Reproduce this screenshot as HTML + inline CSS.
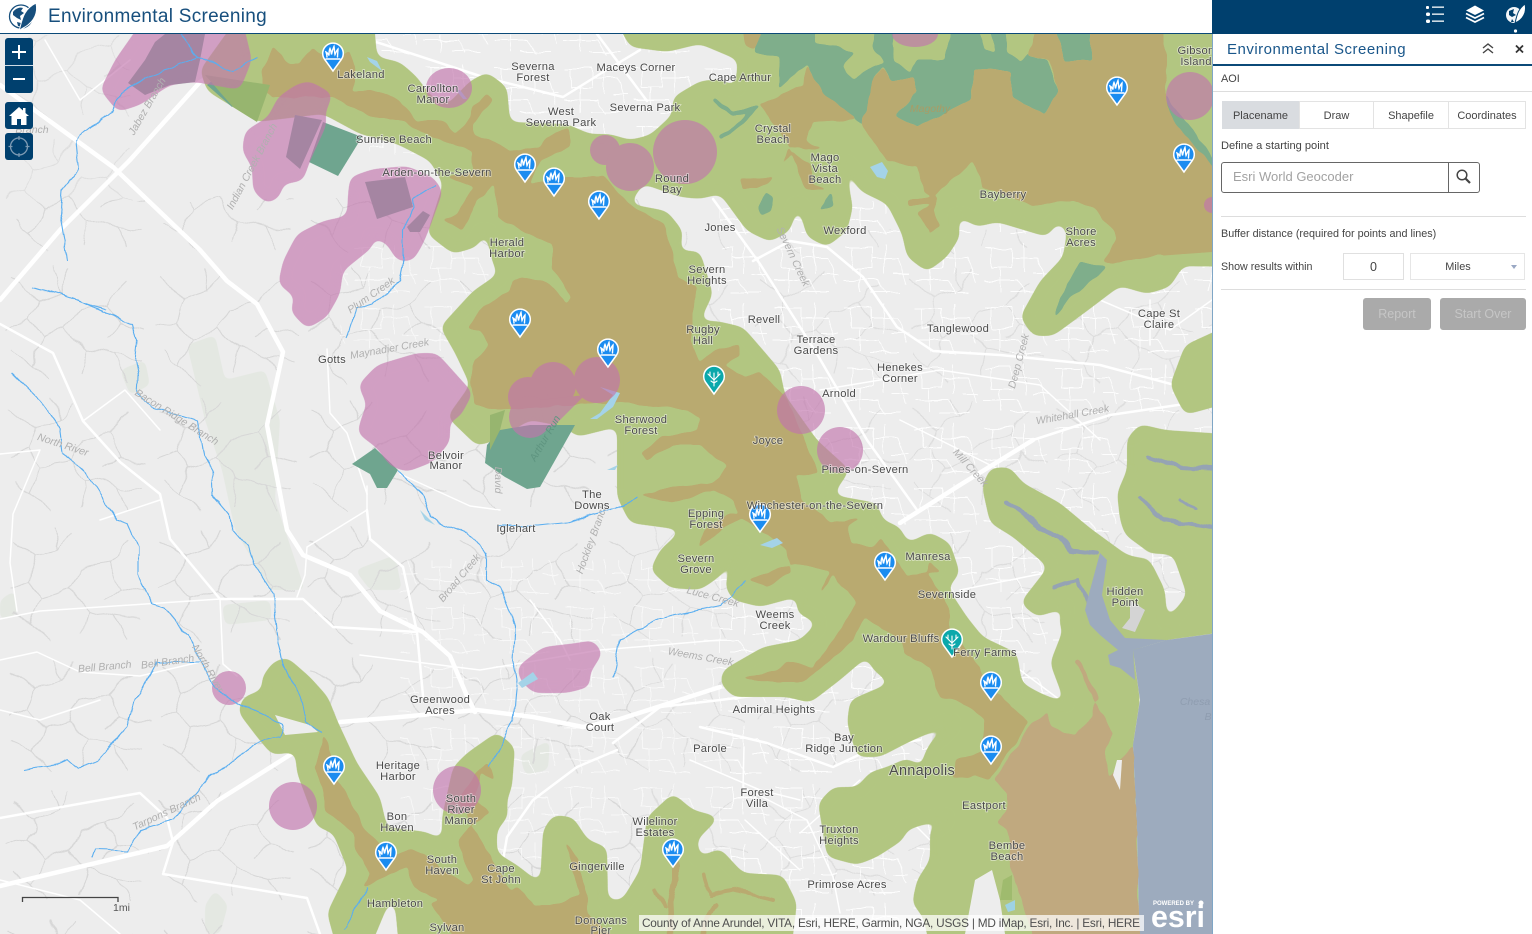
<!DOCTYPE html>
<html><head><meta charset="utf-8"><title>Environmental Screening</title>
<style>
html,body{margin:0;padding:0;width:1532px;height:934px;overflow:hidden;background:#fff;font-family:"Liberation Sans",sans-serif;color:#444}
#map{position:absolute;left:0;top:34px;width:1212px;height:900px;overflow:hidden;background:#ededed}
#map svg{position:absolute;left:0;top:-34px}
#top{position:absolute;left:0;top:0;width:1212px;height:33px;background:#fff;border-bottom:1px solid #0b4a78}
#top .t{position:absolute;left:48px;top:3px;font-size:19px;letter-spacing:.29px;color:#174f7d;line-height:25px;white-space:nowrap}
#panel{position:absolute;left:1212px;top:0;width:320px;height:934px;background:#fff;font-size:10.9px}
#panel .edge{position:absolute;left:0;top:34px;width:1px;height:900px;background:#7fa6c6}
#panel .hd{position:absolute;left:0;top:0;width:320px;height:34px;background:#00406e}
#panel div{position:absolute;white-space:nowrap}
.tab{top:101px;height:28px;line-height:28px;text-align:center;box-sizing:border-box;border:1px solid #e3e3e3;color:#444;font-size:11px}
.line{height:1px;background:#ddd}
.btn{top:298px;height:32px;line-height:33px;background:#aaa;border-radius:3px;color:#c6c6c6;text-align:center;font-size:12.5px}
.ctl{position:absolute;left:5px;width:28px;background:#00406e;border-radius:3px}
.lab text{font-size:11.2px;letter-spacing:.25px;fill:#4a4a4a;stroke:#fff;stroke-width:1.6px;stroke-opacity:.55;paint-order:stroke;text-anchor:middle;font-family:"Liberation Sans",sans-serif}
.str text{font-size:10.5px;font-style:italic;fill:#b0b0b0;text-anchor:middle;font-family:"Liberation Sans",sans-serif}
</style></head><body>
<div id="map">
<svg width="1260" height="980" viewBox="0 0 1260 980">
<defs>
<filter id="r5" filterUnits="userSpaceOnUse" x="-30" y="-30" width="1320" height="1040"><feGaussianBlur stdDeviation="5"/><feComponentTransfer><feFuncA type="linear" slope="18" intercept="-8.5"/></feComponentTransfer></filter>
<filter id="r3" filterUnits="userSpaceOnUse" x="-30" y="-30" width="1320" height="1040"><feGaussianBlur stdDeviation="3.5"/><feComponentTransfer><feFuncA type="linear" slope="14" intercept="-6.5"/></feComponentTransfer></filter>
<filter id="r1" filterUnits="userSpaceOnUse" x="-30" y="-30" width="1320" height="1040"><feTurbulence type="fractalNoise" baseFrequency=".06" numOctaves="2" seed="4" result="n"/><feDisplacementMap in="SourceGraphic" in2="n" scale="5" xChannelSelector="R" yChannelSelector="G" result="d"/><feGaussianBlur in="d" stdDeviation="1.2"/><feComponentTransfer><feFuncA type="linear" slope="10" intercept="-4.5"/></feComponentTransfer></filter>
<filter id="wob" filterUnits="userSpaceOnUse" x="-30" y="-30" width="1320" height="1040"><feTurbulence type="fractalNoise" baseFrequency=".035" numOctaves="2" seed="9" result="n"/><feDisplacementMap in="SourceGraphic" in2="n" scale="16" xChannelSelector="R" yChannelSelector="G"/></filter>
<filter id="wob2" filterUnits="userSpaceOnUse" x="-30" y="-30" width="1320" height="1040"><feTurbulence type="fractalNoise" baseFrequency=".05" numOctaves="2" seed="3" result="n"/><feDisplacementMap in="SourceGraphic" in2="n" scale="7" xChannelSelector="R" yChannelSelector="G"/></filter>
<pattern id="den" width="150" height="130" patternUnits="userSpaceOnUse"><path d="M10 20L35 38L28 60L42 78L30 105M35 38L60 30L72 12M28 60L8 68M42 78L68 70L88 88L82 115M68 70L80 50L108 44L130 22M108 44L120 66L146 72M88 88L116 96L128 120M120 66L104 78M60 30L52 8M116 96L142 100M30 105L50 122M14 92L30 105" fill="none" stroke="#d7d7d7" stroke-width="1.100"/></pattern>
<pattern id="mesh" width="70" height="60" patternUnits="userSpaceOnUse"><path d="M5 8H32V28H12V8M32 18H58M44 4V34M52 34H68M4 40H38L46 54M20 28V52M58 18L66 44M30 52H60" fill="none" stroke="#fff" stroke-width=".9" opacity=".85"/></pattern>
<g id="ic" fill="none" stroke="#fff" stroke-linecap="round">
<path d="M-7 5.500H7" stroke-width="1.500"/>
<path d="M-6 3.500C-6 1-6.500 0-7-1.500C-5-.5-4.500 1-4 2C-4-1-4-3-3-5C-2-3-2-1-1.500 1C-1-2 0-5 1-7C1.500-4 1.500-1 2 1C3-1 3.500-3 5-4.500C5-2 4.500 1 4.500 3.500" stroke-width="1.400"/>
</g>
<g id="pb"><path d="M0 17L-8.300 5.500A10.300 10.300 0 1 1 8.300 5.500Z" fill="#1b8cf0" stroke="#fff" stroke-width="1.500"/><use href="#ic" y="-.5"/></g>
<g id="pt"><path d="M0 17L-8.300 5.500A10.300 10.300 0 1 1 8.300 5.500Z" fill="#0ba8ab" stroke="#fff" stroke-width="1.500"/><path d="M0 9V-4M0 3L-4-1V-5M0 3L4-1V-5M-2 1L-6-3M2 1L6-3M0 6L3 4M0 6L-3 4" fill="none" stroke="#fff" stroke-width="1.100" stroke-linecap="round"/></g>
</defs>
<rect width="1260" height="980" fill="#ededed"/>
<!-- parks -->
<g fill="#e4e8e2" filter="url(#r3)">
<polygon points="187,345 215,335 225,380 265,370 280,420 275,500 305,590 270,590 235,530 222,470 205,420"/>
<polygon points="222,605 270,600 272,620 225,625"/><polygon points="520,755 550,740 548,770 525,775"/>
<polygon points="0,600 15,590 17,615 0,620"/><polygon points="120,370 145,360 150,385 130,395"/>
<polygon points="205,905 215,890 228,905 220,934 205,934"/><polygon points="355,570 395,555 402,590 370,590"/>
</g>
<!-- mesh and dendritic texture -->
<g filter="url(#wob)">
<rect x="0" y="200" width="640" height="780" fill="url(#den)"/>
<rect x="640" y="230" width="600" height="700" fill="url(#den)" opacity=".75"/>
<rect x="0" y="34" width="130" height="170" fill="url(#den)" opacity=".7"/>
</g>
<g filter="url(#wob2)">
<rect x="720" y="200" width="520" height="720" fill="url(#mesh)"/>
<rect x="370" y="34" width="370" height="120" fill="url(#mesh)"/>
<rect x="400" y="560" width="320" height="300" fill="url(#mesh)" opacity=".7"/>
<rect x="340" y="240" width="150" height="110" fill="url(#mesh)" opacity=".7"/>
</g>
<!-- roads -->
<g fill="none" stroke="#fff" stroke-linecap="round" stroke-linejoin="round">
<g stroke-width="4.500">
<polyline points="0,85 113,167 200,250 227,281 257,304 283,352 267,425 287,530 303,555 350,575 380,611 423,632 450,656 467,696 475,712"/>
<polyline points="0,300 60,230 130,160 200,82 240,60"/>
<polyline points="340,722 400,717 477,710 533,717 583,727 617,720 720,687"/>
<polyline points="0,886 167,846 217,801 293,753"/>
<polyline points="900,523 960,485 1033,440"/>
</g>
<g stroke-width="2.500">
<polyline points="713,199 760,264 800,327 817,354 867,440 917,510"/>
<polyline points="753,261 790,241 827,247 863,277 897,327 933,351 1000,355 1100,365 1212,395"/>
<polyline points="373,41 483,77 563,97 600,74 640,50"/><polyline points="597,34 647,101"/>
<polyline points="700,727 767,743 833,767 880,745 920,740"/>
<polyline points="617,750 577,767 533,800 507,837 503,860"/>
<polyline points="613,743 660,707 720,700 800,690"/>
<polyline points="1033,440 1110,415 1212,400"/>
<polyline points="367,510 370,539 403,567 417,632 423,696"/>
<polyline points="0,818 140,793 167,818 173,842 163,874 307,898 320,934"/>
<polyline points="0,324 53,353 83,421 120,462 160,494 170,539 220,599 270,599 303,599 333,627 417,632"/>
</g>
<g stroke-width="1.500">
<polyline points="0,454 40,450 13,514 10,563 17,611"/><polyline points="220,599 223,664 237,676"/>
<polyline points="0,660 37,652 80,672 140,676 200,662"/><polyline points="0,619 40,611 100,607 220,599"/>
<polyline points="367,486 367,510 307,547 305,575 297,597"/><polyline points="400,474 470,506 500,510"/>
<polyline points="327,349 330,413 347,433 367,494"/><polyline points="83,421 125,390 160,430"/>
<polyline points="744,747 743,787 807,820 833,877 840,913"/><polyline points="800,833 860,780"/>
<polyline points="530,600 560,640 570,660"/><polyline points="360,655 480,670 600,650 720,640"/>
<polyline points="820,390 940,370 1040,385 1100,440"/><polyline points="900,420 1000,470"/>
<polyline points="160,500 100,520"/><polyline points="0,710 40,720 100,700"/>
<polyline points="45,40 80,100 130,60"/><polyline points="560,340 600,360"/><polyline points="900,600 980,640 1060,700"/>
<polyline points="690,760 760,790 800,800"/><polyline points="0,880 80,900 120,934"/><polyline points="745,820 800,870"/>
<polyline points="1100,300 1170,330 1212,300"/><polyline points="1150,300 1150,345"/><polyline points="1060,570 960,590"/>
<polyline points="940,690 990,720"/><polyline points="880,790 960,870 950,920"/>
</g>
</g>
<!-- green -->
<g fill="#b2c681" filter="url(#r5)">
<polygon points="243,10 373,10 377,57 400,62 417,77 430,95 447,105 470,81 487,72 507,87 510,122 567,124 590,134 610,134 630,140 650,135 672,115 673,97 700,81 720,79 735,87 738,60 700,44 667,52 630,47 610,10 1240,10 1240,267 1183,266 1170,287 1147,294 1120,286 1087,311 1053,336 1033,336 1020,317 1040,281 1063,257 1067,231 1058,222 1047,237 1027,231 997,222 977,227 958,216 960,237 947,257 927,272 907,257 902,234 887,204 860,191 847,167 828,142 840,146 853,207 847,231 827,247 807,237 798,204 790,231 770,242 747,231 720,194 700,199 680,197 643,184 630,204 667,211 683,231 680,251 700,251 713,294 700,321 717,321 743,327 763,350 780,370 785,395 817,440 850,470 833,495 877,503 883,520 900,527 908,543 930,532 950,543 960,573 948,588 967,617 983,637 1017,653 1022,683 1040,693 1065,703 1040,760 1040,960 933,960 923,917 912,903 917,880 930,860 930,830 947,817 907,830 903,840 877,857 857,865 827,857 818,803 833,787 857,787 870,772 887,767 907,758 923,767 923,757 930,743 953,722 907,743 880,757 857,757 847,723 850,700 890,683 873,670 867,657 840,680 810,703 787,697 733,697 720,683 723,670 763,647 800,640 817,623 797,613 797,597 760,607 733,600 725,587 730,570 742,553 733,557 718,578 700,590 670,588 650,570 660,550 682,530 630,523 617,497 617,453 617,427 577,437 565,427 530,420 497,440 477,446 447,417 470,385 455,353 440,327 473,291 498,274 493,264 485,231 477,247 453,254 427,234 443,184 430,161 397,144 360,134 323,114 257,122 233,107 207,91 200,70"/>
<polygon points="1050,663 1063,630 1058,622 1065,608 1037,617 1020,603 1048,567 1013,537 990,523 982,487 990,468 1010,467 1023,483 1060,503 1090,528 1127,555 1150,560 1165,590 1167,620 1187,595 1173,555 1150,553 1125,535 1120,520 1117,493 1127,470 1127,438 1140,424 1165,430 1240,435 1240,630 1167,640 1133,650 1140,700 1133,745 1137,833 1140,960 1000,960 1000,850 1000,723 1065,703"/>
<polygon points="287,657 310,677 328,697 337,720 357,763 380,797 387,827 427,832 442,840 442,817 453,767 467,753 497,732 515,747 512,787 507,800 508,817 497,830 497,853 517,865 540,883 543,830 553,815 573,817 588,840 607,847 608,900 622,900 640,870 647,817 673,793 693,810 720,817 697,840 700,857 720,848 743,873 783,875 797,903 790,960 400,960 395,905 390,900 365,960 340,960 327,913 348,870 333,833 317,827 297,773 295,752 272,755 257,737 238,712 243,697 262,690 262,677 273,662"/>
<polygon points="1240,320 1185,345 1170,385 1185,415 1240,400"/>
</g>
<!-- water bay -->
<polygon points="1240,630 1167,640 1133,650 1140,700 1133,745 1137,833 1140,960 1240,960" fill="#9dabbe"/>
<g fill="none" stroke="#95a3b4" stroke-linecap="round" stroke-linejoin="round" filter="url(#wob2)">
<polyline points="1007,503 1020,510 1040,527 1060,537 1070,550 1097,553" stroke-width="5"/>
<polyline points="1053,587 1077,580 1090,607" stroke-width="4"/>
<polyline points="1148,457 1180,467 1240,470" stroke-width="4"/><polyline points="1140,497 1163,520 1240,533" stroke-width="4"/>
<polyline points="1180,500 1195,510" stroke-width="3"/>
</g>
<polygon points="1100,553 1107,560 1102,595 1110,620 1125,638 1167,640 1133,650 1135,680 1120,668 1110,665 1108,655 1118,650 1100,635 1090,625 1085,610 1090,590" fill="#9dabbe"/>
<polygon points="1130,600 1145,610 1135,632 1122,628 1130,618" fill="#d4d4d4"/>
<!-- teal north -->
<g fill="#7fae8b" filter="url(#r1)">
<polygon points="760,10 755,54 780,57 778,90 807,64 823,94 862,124 884,114 873,81 883,66 892,81 913,76 918,92 895,116 917,127 972,99 975,69 1012,72 1012,97 1045,114 1059,91 1048,61 1028,57 1040,10"/>
<polygon points="1050,10 1065,62 1092,59 1088,10"/>
<polygon points="1165,94 1240,195 1240,225 1168,130"/>
<polygon points="1080,261 1107,267 1067,301 1053,318 1060,298"/>
<polygon points="758,208 766,192 772,197 771,210 762,216"/>
<polyline points="713,99 733,114 755,109 735,128 720,138" fill="none" stroke="#7fae8b" stroke-width="4"/>
<polygon points="825,200 832,192 833,205 820,212"/>
</g>
<g fill="#b2c681" filter="url(#r1)">
<polygon points="813,10 815,44 840,47 853,54 843,67 853,79 873,67 885,62 873,47 875,10"/>
<polygon points="893,44 895,61 910,72 917,59 945,59 957,10 895,10"/>
<polygon points="1000,10 1008,51 1020,62 1033,51 1040,42 1043,10"/>
<polygon points="975,10 985,50 995,52 985,10"/>
</g>
<!-- tan -->
<g fill="#b9aa70" filter="url(#r1)">
<polygon points="273,47 290,64 300,64 312,48 335,60 350,51 355,70 352,91 380,91 400,101 417,121 443,121 455,134 470,117 473,107 487,94 493,101 472,124 475,134 510,151 540,147 547,137 570,127 570,147 540,161 530,184 567,177 603,177 630,204 663,224 673,251 677,277 697,287 693,324 690,340 700,362 715,350 738,345 740,355 725,365 745,378 760,372 785,395 800,430 815,463 818,473 797,475 802,500 830,522 863,518 848,525 850,543 873,547 882,538 908,577 927,572 930,562 940,572 928,573 950,610 950,630 980,667 983,683 1002,697 1030,723 990,780 975,775 970,778 952,777 957,760 982,750 985,720 957,700 940,697 930,667 903,653 903,643 865,617 852,640 843,650 803,682 770,682 742,678 777,670 787,662 813,667 838,633 857,602 833,575 817,600 830,572 793,563 767,573 748,580 767,587 790,573 788,555 787,550 760,530 742,518 725,527 710,540 698,548 705,530 727,515 740,513 733,500 713,490 673,503 640,495 670,487 713,483 727,467 700,445 673,445 647,462 640,453 663,437 697,430 700,418 687,410 620,402 500,410 475,405 470,385 475,360 490,345 480,330 467,327 483,307 510,291 513,281 520,277 550,284 567,304 572,297 552,268 552,244 523,231 498,217 495,184 477,201 463,231 443,221 457,214 473,187 447,177 473,171 473,151 443,141 420,131 403,121 370,116 355,109 333,97 272,97 263,91 262,70"/>
<polygon points="1088,10 1160,10 1167,67 1165,94 1173,121 1240,200 1240,250 1157,256 1112,264 1103,261 1118,237 1093,207 1073,201 1033,206 983,187 973,162 950,181 937,194 907,201 908,207 933,203 917,214 930,231 923,237 940,227 933,211 938,197 923,191 917,166 887,162 863,127 862,124 873,81 883,67 892,81 913,76 918,92 895,116 917,127 972,99 975,69 1012,72 1012,97 1045,114 1059,91 1050,61 1028,57 1040,10 1050,10 1065,62 1092,59"/>
<polygon points="760,104 802,86 807,64 822,92 857,119 813,122 805,141 825,150 790,147 775,177 740,179 742,189 760,186 768,184 793,151 810,165 813,184 828,191 805,188 790,147"/>
<polygon points="755,10 760,34 755,50 745,45 740,10"/>
<polygon points="323,735 332,757 337,780 345,790 357,815 365,830 385,848 390,855 410,850 425,853 450,875 468,885 473,880 463,860 458,840 470,827 490,812 475,800 482,773 495,780 487,762 476,775 458,800 510,890 517,887 530,900 533,905 550,905 568,900 580,895 573,870 565,840 577,857 587,897 587,913 640,960 470,960 430,903 440,900 413,888 407,867 363,888 370,873 355,850 353,833 325,810 322,787 315,768"/>
</g>
<g fill="none" stroke="#b9aa70" stroke-linejoin="round" stroke-linecap="round" filter="url(#wob2)">
<polyline points="675,858 675,880 670,900 672,950" stroke-width="6"/>
<polyline points="705,875 710,895 735,890 773,900" stroke-width="4"/><polyline points="715,905 705,925 700,950" stroke-width="5"/>
<polyline points="655,890 665,905" stroke-width="4"/>
</g>
<polygon points="1112,264 1157,256 1240,250 1240,267 1183,266 1120,275" fill="#b2c681"/>
<!-- light tan lower -->
<g filter="url(#r1)"><polygon points="1033,723 1047,712 1052,727 1065,733 1075,735 1093,716 1095,700 1113,733 1105,753 1108,778 1133,745 1137,833 1140,960 1040,960 1027,917 1010,867 1008,830 997,823 1007,810 1007,793 995,780" fill="#c0a97f"/>
<polyline points="1077,660 1097,700" fill="none" stroke="#c0a97f" stroke-width="5"/></g>
<polygon points="1003,880 1012,875 1012,900 1000,900" fill="#9fbb6e"/>
<!-- white pockets -->
<g fill="#ededed">
<polygon points="1095,712 1085,735 1072,725 1085,705" opacity="0"/>
<polygon points="1117,760 1122,760 1120,790 1113,775"/>
<polygon points="975,880 992,870 1000,900 1005,934 965,934"/>
<polygon points="275,715 310,725 318,732 285,735"/>
</g>
<polygon points="1005,905 1015,900 1015,910 1008,912" fill="#9ed2e4"/>
<!-- dark teal under pink -->
<g fill="#6fa58f">
<polygon points="323,122 362,137 338,176 309,162"/>
<polygon points="295,115 322,120 300,169 286,157"/>
<polygon points="128,83 145,60 155,42 165,34 205,34 200,60 195,82 170,85 145,95"/>
<polygon points="207,85 232,107 240,100 213,80"/>
<polygon points="365,182 405,177 413,207 377,219"/>
<polygon points="407,227 423,211 430,215 420,232 410,232"/>
<polygon points="487,445 500,430 530,425 575,425 540,487 527,489 505,477 485,463"/>
<polygon points="352,464 375,448 398,470 387,488 377,488 370,474"/>
</g>
<polygon points="205,75 270,85 257,122 233,107" fill="#97b56f"/>
<polygon points="500,430 490,450 490,415 505,410" fill="#97b56f"/>
<!-- lakes -->
<g fill="#a4d3e8">
<polygon points="600,387 620,393 613,407 597,419 590,419 600,413 613,395"/>
<polygon points="870,167 882,162 888,171 885,179 877,177"/>
<polygon points="760,545 777,538 783,543 772,548"/>
<polygon points="367,57 377,61 382,71 370,62"/>
<polygon points="460,90 467,99 463,99 456,90"/>
<polygon points="607,470 618,465 615,470"/>
<polygon points="420,510 430,520 435,525 425,520"/>
</g>
<!-- pink -->
<g fill="#c275ad" opacity=".65">
<g filter="url(#r5)">
<polygon points="150,10 115,60 100,90 118,112 140,105 170,85 195,82 240,90 252,60 240,10"/>
<polygon points="310,81 333,94 325,114 327,124 310,161 303,181 283,184 280,197 267,204 253,191 252,167 242,151 245,131 268,117 278,97 297,84"/>
<polygon points="350,177 373,169 407,166 433,177 443,191 430,227 423,244 413,261 397,261 387,244 373,237 373,247 343,271 340,294 327,317 307,329 290,311 295,297 278,284 283,261 297,234 323,221 347,216 348,194"/>
<polygon points="358,385 377,365 417,353 437,353 473,393 460,417 450,421 450,442 433,462 407,472 390,466 377,448 357,433 363,413 367,405"/>
<polygon points="517,667 543,647 577,643 593,640 603,653 590,673 590,687 567,693 533,693 520,680"/>
</g>
<ellipse cx="449" cy="88" rx="23" ry="20"/>
<circle cx="605" cy="150" r="15"/><circle cx="630" cy="167" r="24"/><circle cx="685" cy="152" r="32"/>
<circle cx="1190" cy="96" r="24"/><circle cx="1212" cy="205" r="8"/><ellipse cx="915" cy="34" rx="23" ry="13"/>
<circle cx="597" cy="380" r="23"/><circle cx="553" cy="385" r="23"/><circle cx="528" cy="397" r="20"/><circle cx="530" cy="417" r="21"/><polygon points="540,400 585,395 555,425 545,430"/>
<circle cx="801" cy="410" r="24"/><circle cx="840" cy="450" r="23"/>
<circle cx="229" cy="688" r="17"/><circle cx="293" cy="806" r="24"/><circle cx="457" cy="790" r="24"/>
</g>
<polygon points="518,683 533,672 538,679 522,688" fill="#a4d3e8"/>
<!-- blue streams -->
<g fill="none" stroke="#5aaef0" stroke-width="1.100" stroke-linejoin="round" filter="url(#wob2)">
<polyline points="77,300 107,314 133,324 137,340 135,361 138,377 137,393 153,407 197,421 203,454 212,470 213,494 230,514 233,530 248,547 253,563 273,595 278,644 283,664 287,673 303,703 307,722 322,733"/>
<polyline points="12,373 40,401 60,429 63,452 87,474 110,510 117,520 128,524 138,547 138,575 150,603 163,607 193,644 213,688 237,704 283,725"/>
<polyline points="23,771 50,767 68,759 78,768 98,761 110,747 128,727 135,700 143,688 157,662 200,662"/>
<polyline points="92,858 95,849 127,850 140,830 173,820 207,779 257,743 280,737 283,725"/>
<polyline points="398,470 423,494 430,518 467,532 487,555 487,579 500,587 515,625 513,660 517,680 513,720 490,768"/>
<polyline points="613,677 620,640 660,618 720,605 747,580"/>
<polyline points="435,184 412,199 413,207 403,231 403,264 400,281 373,304 357,309 348,337"/>
<polyline points="75,140 113,110 120,93 147,77 197,57 233,70 257,58"/><polyline points="180,34 197,57"/>
<polyline points="75,140 78,170 62,190 60,215 68,260"/><polyline points="33,287 60,295 105,310"/>
<polyline points="367,888 343,930"/><polyline points="498,526 538,526 567,523 617,508 638,496"/>
</g>
<!-- stream labels -->
<g class="str">
<text transform="translate(150,108) rotate(-60)">Jabez Branch</text>
<text transform="translate(255,168) rotate(-62)">Indian Creek Branch</text>
<text transform="translate(373,298) rotate(-35)">Plum Creek</text>
<text transform="translate(390,352) rotate(-10)">Maynadier Creek</text>
<text transform="translate(175,420) rotate(32)">Bacon Ridge Branch</text>
<text transform="translate(62,448) rotate(18)">North River</text>
<text transform="translate(105,670) rotate(-5)">Bell Branch</text>
<text transform="translate(168,665) rotate(-8)">Bell Branch</text>
<text transform="translate(205,670) rotate(60)">North River</text>
<text transform="translate(168,815) rotate(-25)">Tarpons Branch</text>
<text transform="translate(462,580) rotate(-50)">Broad Creek</text>
<text transform="translate(595,540) rotate(-70)">Hockley Branch</text>
<text transform="translate(712,600) rotate(15)">Luce Creek</text>
<text transform="translate(700,660) rotate(10)">Weems Creek</text>
<text transform="translate(790,258) rotate(65)">Severn Creek</text>
<text transform="translate(1022,362) rotate(-75)">Deep Creek</text>
<text transform="translate(1073,418) rotate(-10)">Whitehall Creek</text>
<text transform="translate(968,470) rotate(48)">Mill Creek</text>
<text transform="translate(495,480) rotate(90)">David</text>
<text transform="translate(548,440) rotate(-60)" style="fill:#5f9580">Arthur Run</text>
<text x="930" y="112" style="fill:#a99c66">Magothy</text>
<text x="1195" y="705" style="fill:#8f9db0">Chesa</text><text x="1208" y="720" style="fill:#8f9db0">B</text>
<text x="32" y="133">Branch</text>
</g>
<!-- pins -->
<use href="#pb" x="333" y="54"/><use href="#pb" x="525" y="165"/><use href="#pb" x="554" y="179"/><use href="#pb" x="599" y="202"/>
<use href="#pb" x="1117" y="88"/><use href="#pb" x="1184" y="155"/><use href="#pb" x="520" y="320"/><use href="#pb" x="608" y="350"/>
<use href="#pb" x="760" y="515"/><use href="#pb" x="885" y="563"/><use href="#pb" x="991" y="683"/><use href="#pb" x="991" y="747"/>
<use href="#pb" x="334" y="767"/><use href="#pb" x="386" y="853"/><use href="#pb" x="673" y="850"/>
<use href="#pt" x="714" y="377"/><use href="#pt" x="952" y="640"/>
<!-- labels -->
<g class="lab">
<text x="361" y="78">Lakeland</text><text x="433" y="92">Carrollton</text><text x="433" y="103">Manor</text>
<text x="533" y="70">Severna</text><text x="533" y="81">Forest</text><text x="636" y="71">Maceys Corner</text><text x="740" y="81">Cape Arthur</text>
<text x="561" y="115">West</text><text x="561" y="126">Severna Park</text><text x="645" y="111">Severna Park</text>
<text x="773" y="132">Crystal</text><text x="773" y="143">Beach</text><text x="394" y="143">Sunrise Beach</text><text x="437" y="176">Arden-on-the-Severn</text>
<text x="672" y="182">Round</text><text x="672" y="193">Bay</text><text x="825" y="161">Mago</text><text x="825" y="172">Vista</text><text x="825" y="183">Beach</text>
<text x="1003" y="198">Bayberry</text><text x="720" y="231">Jones</text><text x="845" y="234">Wexford</text>
<text x="1081" y="235">Shore</text><text x="1081" y="246">Acres</text><text x="507" y="246">Herald</text><text x="507" y="257">Harbor</text>
<text x="707" y="273">Severn</text><text x="707" y="284">Heights</text><text x="764" y="323">Revell</text>
<text x="1159" y="317">Cape St</text><text x="1159" y="328">Claire</text><text x="958" y="332">Tanglewood</text>
<text x="703" y="333">Rugby</text><text x="703" y="344">Hall</text><text x="816" y="343">Terrace</text><text x="816" y="354">Gardens</text>
<text x="332" y="363">Gotts</text><text x="900" y="371">Henekes</text><text x="900" y="382">Corner</text><text x="839" y="397">Arnold</text>
<text x="641" y="423">Sherwood</text><text x="641" y="434">Forest</text><text x="768" y="444">Joyce</text>
<text x="446" y="459">Belvoir</text><text x="446" y="469">Manor</text><text x="865" y="473">Pines-on-Severn</text>
<text x="592" y="498">The</text><text x="592" y="509">Downs</text><text x="815" y="509">Winchester-on-the-Severn</text>
<text x="706" y="517">Epping</text><text x="706" y="528">Forest</text><text x="516" y="532">Iglehart</text>
<text x="696" y="562">Severn</text><text x="696" y="573">Grove</text><text x="928" y="560">Manresa</text><text x="947" y="598">Severnside</text>
<text x="1125" y="595">Hidden</text><text x="1125" y="606">Point</text><text x="775" y="618">Weems</text><text x="775" y="629">Creek</text>
<text x="901" y="642">Wardour Bluffs</text><text x="985" y="656">Ferry Farms</text>
<text x="440" y="703">Greenwood</text><text x="440" y="714">Acres</text><text x="774" y="713">Admiral Heights</text>
<text x="600" y="720">Oak</text><text x="600" y="731">Court</text><text x="844" y="741">Bay</text><text x="844" y="752">Ridge Junction</text>
<text x="710" y="752">Parole</text><text x="398" y="769">Heritage</text><text x="398" y="780">Harbor</text>
<text x="922" y="775" style="font-size:14.5px">Annapolis</text><text x="757" y="796">Forest</text><text x="757" y="807">Villa</text>
<text x="984" y="809">Eastport</text><text x="461" y="802">South</text><text x="461" y="813">River</text><text x="461" y="824">Manor</text>
<text x="397" y="820">Bon</text><text x="397" y="831">Haven</text><text x="655" y="825">Wilelinor</text><text x="655" y="836">Estates</text>
<text x="839" y="833">Truxton</text><text x="839" y="844">Heights</text><text x="1007" y="849">Bembe</text><text x="1007" y="860">Beach</text>
<text x="442" y="863">South</text><text x="442" y="874">Haven</text><text x="501" y="872">Cape</text><text x="501" y="883">St John</text>
<text x="597" y="870">Gingerville</text><text x="847" y="888">Primrose Acres</text><text x="395" y="907">Hambleton</text>
<text x="601" y="924">Donovans</text><text x="601" y="934">Pier</text><text x="447" y="931">Sylvan</text>
<text x="1196" y="54">Gibson</text><text x="1196" y="65">Island</text>
</g>
<!-- scale -->
<path d="M22.500 902V897.500H118V902" fill="none" stroke="#444" stroke-width="1.300"/>
<text x="113" y="911" font-size="10.500" font-family="Liberation Sans" fill="#555">1mi</text>
<!-- attribution -->
<rect x="639" y="915" width="505" height="16" fill="#fff" opacity=".72"/>
<text x="642" y="927" font-size="11.800" font-family="Liberation Sans" fill="#4e4e4e" textLength="498">County of Anne Arundel, VITA, Esri, HERE, Garmin, NGA, USGS | MD iMap, Esri, Inc. | Esri, HERE</text>
<!-- esri -->
<text x="1153" y="905" font-size="6" font-weight="bold" font-family="Liberation Sans" fill="#fff">POWERED BY</text>
<circle cx="1201" cy="903" r="2.500" fill="#fff"/>
<text x="1151" y="927" font-size="31" font-weight="bold" font-family="Liberation Sans" fill="#fff" textLength="54" lengthAdjust="spacingAndGlyphs">esri</text>
</svg>
</div>
<!-- controls -->
<div class="ctl" style="top:38px;height:55px">
<div style="position:absolute;left:0;top:26.500px;width:28px;height:1px;background:#cfdbe5"></div>
<div style="position:absolute;left:7px;top:13px;width:14px;height:2px;background:#fff"></div><div style="position:absolute;left:13px;top:7px;width:2px;height:14px;background:#fff"></div>
<div style="position:absolute;left:8px;top:40px;width:12px;height:2px;background:#fff"></div>
</div>
<div class="ctl" style="top:102px;height:27px"><svg width="28" height="27" style="display:block"><path d="M14 5L4 14H6.500V23H12V17H16V23H21.500V14H24L20.500 11V6H18V8.500Z" fill="#fff"/></svg></div>
<div class="ctl" style="top:133px;height:27px"><svg width="28" height="27" style="display:block"><circle cx="14" cy="13.500" r="8.500" fill="none" stroke="#7c9ab3" stroke-width="1.300"/><path d="M14 3V7M14 20V24M3.500 13.500H7.500M20.500 13.500H24.500" stroke="#7c9ab3" stroke-width="1.200"/></svg></div>
<div id="top">
<svg width="40" height="33" style="position:absolute;left:8px;top:0"><circle cx="13" cy="16.500" r="11.500" fill="none" stroke="#174f7d" stroke-width="1.300"/><path d="M5 12C8 8 12 7 15 8L13 11L16 13L12 16L13 20L9 18L5 15ZM9 22L13 23L14 27L10 26Z" fill="#174f7d"/><path d="M28 3C30 12 27 21 17 27C13 29 12 30 11 31C14 22 14 10 28 3Z" fill="#174f7d" stroke="#fff" stroke-width="1"/></svg>
<div class="t" style="top:4px">Environmental Screening</div>
</div>
<div id="panel">
<div class="hd">
<svg width="320" height="34" style="position:absolute;left:0;top:0"><g fill="#fff"><rect x="214" y="6" width="3" height="3" rx="1"/><rect x="214" y="12.500" width="4" height="3.500" rx="1.500"/><rect x="214" y="19.500" width="4" height="3.500" rx="1.500"/><rect x="220" y="6.500" width="12" height="1.300"/><rect x="220" y="13.500" width="12" height="1.300"/><rect x="220" y="20.500" width="12" height="1.300"/>
<path d="M263 5.500L272 10.500L263 15L254 10.500Z"/></g><path d="M254 13.500L263 18L272 13.500M254 17.500L263 22L272 17.500" fill="none" stroke="#fff" stroke-width="1.700"/><circle cx="302" cy="15" r="8" fill="#fff" opacity=".95"/><path d="M297 11L302 9L301 13L304 15L300 17L297 15ZM300 19L302 22L299 22Z" fill="#00406e"/><path d="M313 4C315 12 311 20 303 23C305 15 306 9 313 4Z" fill="#fff" stroke="#00406e"/><circle cx="303.500" cy="31" r="1.600" fill="#fff"/></svg>
</div>
<div class="edge"></div>
<div style="left:15px;top:41px;font-size:15px;letter-spacing:.5px;color:#19568a;line-height:18px">Environmental Screening</div>
<svg width="60" height="20" style="position:absolute;left:266px;top:40px"><path d="M5 8L10 4L15 8M5 13L10 9L15 13" fill="none" stroke="#444" stroke-width="1.400"/><path d="M38 5.500L45 12.500M45 5.500L38 12.500" stroke="#333" stroke-width="1.800"/></svg>
<div style="left:1px;top:64px;width:319px;height:2px;background:#0b4a78"></div>
<div style="left:9px;top:72px;line-height:14px">AOI</div>
<div class="line" style="left:1px;top:91px;width:319px"></div>
<div class="tab" style="left:10px;width:77px;background:#d9dce0;border-color:#d9dce0">Placename</div>
<div class="tab" style="left:87px;width:75px">Draw</div>
<div class="tab" style="left:162px;width:75px;border-left:none">Shapefile</div>
<div class="tab" style="left:237px;width:77px;border-left:none">Coordinates</div>
<div style="left:9px;top:139px;line-height:14px;font-size:11.1px">Define a starting point</div>
<div style="left:9px;top:162px;width:257px;height:29px;border:1px solid #666;border-radius:3px"></div>
<div style="left:236px;top:162px;width:1px;height:31px;background:#666"></div>
<div style="left:21px;top:169px;font-size:13px;line-height:16px;color:#a2a2a2">Esri World Geocoder</div>
<svg width="20" height="20" style="position:absolute;left:242px;top:167px"><circle cx="8" cy="8" r="4.800" fill="none" stroke="#444" stroke-width="1.500"/><path d="M11.500 11.500L16 16" stroke="#444" stroke-width="2.200"/></svg>
<div class="line" style="left:9px;top:216px;width:305px"></div>
<div style="left:9px;top:227px;line-height:14px;font-size:10.800px">Buffer distance (required for points and lines)</div>
<div style="left:9px;top:260px;line-height:14px;font-size:10.700px">Show results within</div>
<div style="left:131px;top:253px;width:59px;height:25px;border:1px solid #e0e0e0;text-align:center;line-height:26px;font-size:12.500px">0</div>
<div style="left:198px;top:253px;width:94px;padding-right:19px;height:25px;border:1px solid #e6e6e6;text-align:center;line-height:26px">Miles</div>
<div style="left:299px;top:265px;width:0;height:0;border-left:3px solid transparent;border-right:3px solid transparent;border-top:4px solid #9aa8c4"></div>
<div class="line" style="left:9px;top:289px;width:305px"></div>
<div class="btn" style="left:151px;width:68px">Report</div>
<div class="btn" style="left:228px;width:86px">Start Over</div>
</div>
</body></html>
